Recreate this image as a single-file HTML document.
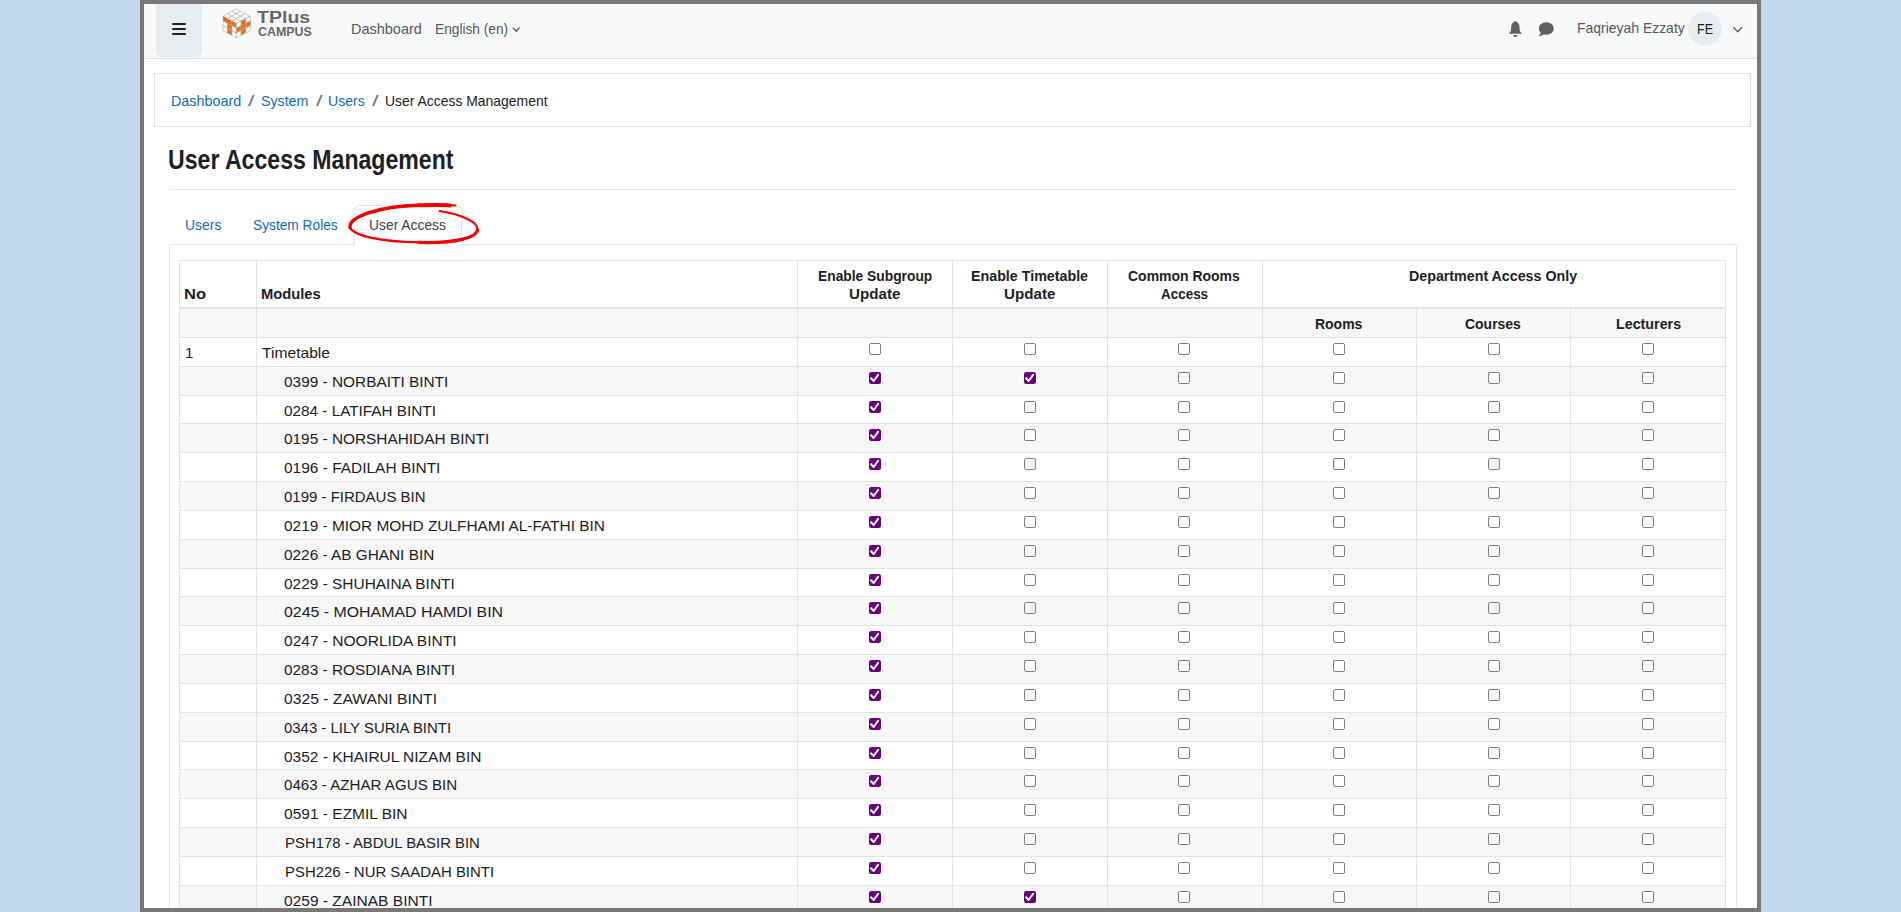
<!DOCTYPE html>
<html><head><meta charset="utf-8"><title>User Access Management</title>
<style>
*{box-sizing:border-box;margin:0;padding:0}
html,body{width:1901px;height:912px;overflow:hidden}
body{background:#c3d8ec;font-family:"Liberation Sans",sans-serif;color:#1d2125;position:relative}
.tx{position:absolute;white-space:nowrap;line-height:1;transform-origin:0 0}
.hl{position:absolute;height:1px;background:#e0e3e7}
.vl{position:absolute;width:1px;background:#e0e3e7}
.cb{position:absolute;width:12px;height:12px;border:1px solid #808080;border-radius:2px;background:#fff}
.ck{position:absolute}
</style></head><body>
<div style="position:absolute;left:140px;top:0;width:1621px;height:912px;background:#7b7776"></div>
<div style="position:absolute;left:144px;top:4px;width:1613px;height:904px;background:#fff"></div>
<div style="position:absolute;left:144px;top:4px;width:1613px;height:55px;background:#f8f9fa;border-bottom:1px solid #dee2e6"></div>
<div style="position:absolute;left:156px;top:4px;width:46px;height:53px;background:#e9ecef;border-radius:0 0 6px 6px"></div>
<div style="position:absolute;left:172px;top:23px;width:14px;height:2px;background:#1d2125;border-radius:1px"></div>
<div style="position:absolute;left:172px;top:28px;width:14px;height:2px;background:#1d2125;border-radius:1px"></div>
<div style="position:absolute;left:172px;top:33px;width:14px;height:2px;background:#1d2125;border-radius:1px"></div>
<svg style="position:absolute;left:0;top:0" width="1901" height="912" viewBox="0 0 1901 912">
<polygon points="223.00,16.20 227.47,13.77 231.93,16.17 227.47,18.60" fill="#ffffff" stroke="#aaa39c" stroke-width="0.55"/>
<polygon points="227.47,13.77 231.93,11.33 236.40,13.73 231.93,16.17" fill="#ffffff" stroke="#aaa39c" stroke-width="0.55"/>
<polygon points="231.93,11.33 236.40,8.90 240.87,11.30 236.40,13.73" fill="#ffffff" stroke="#aaa39c" stroke-width="0.55"/>
<polygon points="227.47,18.60 231.93,16.17 236.40,18.57 231.93,21.00" fill="#ffffff" stroke="#aaa39c" stroke-width="0.55"/>
<polygon points="231.93,16.17 236.40,13.73 240.87,16.13 236.40,18.57" fill="#ffffff" stroke="#aaa39c" stroke-width="0.55"/>
<polygon points="236.40,13.73 240.87,11.30 245.33,13.70 240.87,16.13" fill="#ffffff" stroke="#aaa39c" stroke-width="0.55"/>
<polygon points="231.93,21.00 236.40,18.57 240.87,20.97 236.40,23.40" fill="#ffffff" stroke="#aaa39c" stroke-width="0.55"/>
<polygon points="236.40,18.57 240.87,16.13 245.33,18.53 240.87,20.97" fill="#ffffff" stroke="#aaa39c" stroke-width="0.55"/>
<polygon points="240.87,16.13 245.33,13.70 249.80,16.10 245.33,18.53" fill="#ffffff" stroke="#aaa39c" stroke-width="0.55"/>
<polygon points="223.00,16.20 227.47,18.60 227.47,23.40 223.00,21.00" fill="#e8711c" stroke="#aaa39c" stroke-width="0.55"/>
<polygon points="227.47,18.60 231.93,21.00 231.93,25.80 227.47,23.40" fill="#e8711c" stroke="#aaa39c" stroke-width="0.55"/>
<polygon points="231.93,21.00 236.40,23.40 236.40,28.20 231.93,25.80" fill="#e8711c" stroke="#aaa39c" stroke-width="0.55"/>
<polygon points="223.00,21.00 227.47,23.40 227.47,28.20 223.00,25.80" fill="#ffffff" stroke="#aaa39c" stroke-width="0.55"/>
<polygon points="227.47,23.40 231.93,25.80 231.93,30.60 227.47,28.20" fill="#e8711c" stroke="#aaa39c" stroke-width="0.55"/>
<polygon points="231.93,25.80 236.40,28.20 236.40,33.00 231.93,30.60" fill="#ffffff" stroke="#aaa39c" stroke-width="0.55"/>
<polygon points="223.00,25.80 227.47,28.20 227.47,33.00 223.00,30.60" fill="#ffffff" stroke="#aaa39c" stroke-width="0.55"/>
<polygon points="227.47,28.20 231.93,30.60 231.93,35.40 227.47,33.00" fill="#e8711c" stroke="#aaa39c" stroke-width="0.55"/>
<polygon points="231.93,30.60 236.40,33.00 236.40,37.80 231.93,35.40" fill="#ffffff" stroke="#aaa39c" stroke-width="0.55"/>
<polygon points="236.40,23.40 241.13,20.93 241.13,25.73 236.40,28.20" fill="#ffffff" stroke="#aaa39c" stroke-width="0.55"/>
<polygon points="241.13,20.93 245.87,18.47 245.87,23.27 241.13,25.73" fill="#e8711c" stroke="#aaa39c" stroke-width="0.55"/>
<polygon points="245.87,18.47 250.60,16.00 250.60,20.80 245.87,23.27" fill="#ffffff" stroke="#aaa39c" stroke-width="0.55"/>
<polygon points="236.40,28.20 241.13,25.73 241.13,30.53 236.40,33.00" fill="#e8711c" stroke="#aaa39c" stroke-width="0.55"/>
<polygon points="241.13,25.73 245.87,23.27 245.87,28.07 241.13,30.53" fill="#e8711c" stroke="#aaa39c" stroke-width="0.55"/>
<polygon points="245.87,23.27 250.60,20.80 250.60,25.60 245.87,28.07" fill="#e8711c" stroke="#aaa39c" stroke-width="0.55"/>
<polygon points="236.40,33.00 241.13,30.53 241.13,35.33 236.40,37.80" fill="#ffffff" stroke="#aaa39c" stroke-width="0.55"/>
<polygon points="241.13,30.53 245.87,28.07 245.87,32.87 241.13,35.33" fill="#e8711c" stroke="#aaa39c" stroke-width="0.55"/>
<polygon points="245.87,28.07 250.60,25.60 250.60,30.40 245.87,32.87" fill="#ffffff" stroke="#aaa39c" stroke-width="0.55"/>
<path d="M1515.3 21.1 C1513.6 22.2 1511.4 23.4 1511.2 26.5 L1510.9 30.5 C1510.6 32 1509.6 32.9 1508.9 33.8 L1522 33.8 C1521.2 32.9 1520.2 32 1519.8 30.5 L1519.5 26.5 C1519.3 23.4 1517.1 22.2 1515.3 21.1 Z" fill="#616161"/>
<path d="M1513.3 34.9 L1517.7 34.9 C1517.5 36.2 1516.6 37 1515.5 37 C1514.4 37 1513.5 36.2 1513.3 34.9 Z" fill="#616161"/>
<ellipse cx="1546.3" cy="28.5" rx="7.5" ry="6.2" fill="#616161"/>
<path d="M1540.8 31.5 C1540.8 33.5 1539.8 35 1538.2 36 C1540.8 36 1542.6 35.2 1543.8 34.2 Z" fill="#616161"/>
<path d="M512.9 27.6 L516.3 31.3 L519.7 27.6" fill="none" stroke="#555b61" stroke-width="1.3"/>
<path d="M1733.5 27.3 L1737.7 31.8 L1741.9 27.3" fill="none" stroke="#555b61" stroke-width="1.3"/>
<circle cx="1704.9" cy="28.9" r="16.9" fill="#e9ecef"/>
</svg>
<div class="tx" style="left:256.6px;top:10px;font-size:16.8px;font-weight:700;color:#686868;transform:scaleX(1.165)">TPlus</div>
<div class="tx" style="left:257.8px;top:26.3px;font-size:12.6px;font-weight:700;color:#686868;transform:scaleX(0.985)">CAMPUS</div>
<div style="position:absolute;left:154px;top:73px;width:1597px;height:54px;border:1px solid #dee2e6;background:#fff"></div>
<div style="position:absolute;left:169px;top:189px;width:1567px;height:1px;background:#e3e5e8"></div>
<div style="position:absolute;left:169px;top:244px;width:1568px;height:680px;border:1px solid #e3e6e9;border-radius:3px;background:#fff"></div>
<div style="position:absolute;left:354px;top:205px;width:108px;height:40px;border:1px solid #e0e3e6;border-bottom:none;border-radius:6px 6px 0 0;background:#fff"></div>
<div style="position:absolute;left:180px;top:308px;width:1545px;height:29px;background:#f7f7f7"></div>
<div style="position:absolute;left:180px;top:366.00px;width:1545px;height:29.00px;background:#f7f7f7"></div>
<div style="position:absolute;left:180px;top:423.00px;width:1545px;height:29.00px;background:#f7f7f7"></div>
<div style="position:absolute;left:180px;top:481.00px;width:1545px;height:29.00px;background:#f7f7f7"></div>
<div style="position:absolute;left:180px;top:539.00px;width:1545px;height:29.00px;background:#f7f7f7"></div>
<div style="position:absolute;left:180px;top:596.00px;width:1545px;height:29.00px;background:#f7f7f7"></div>
<div style="position:absolute;left:180px;top:654.00px;width:1545px;height:29.00px;background:#f7f7f7"></div>
<div style="position:absolute;left:180px;top:712.00px;width:1545px;height:29.00px;background:#f7f7f7"></div>
<div style="position:absolute;left:180px;top:769.00px;width:1545px;height:29.00px;background:#f7f7f7"></div>
<div style="position:absolute;left:180px;top:827.00px;width:1545px;height:29.00px;background:#f7f7f7"></div>
<div style="position:absolute;left:180px;top:885.00px;width:1545px;height:29.00px;background:#f7f7f7"></div>
<div class="hl" style="left:179px;top:260px;width:1547px"></div>
<div class="hl" style="left:179px;top:307px;width:1547px;height:2px;background:#e2e5e9"></div>
<div class="hl" style="left:1262px;top:307px;width:464px"></div>
<div class="hl" style="left:179px;top:337.00px;width:1547px"></div>
<div class="hl" style="left:179px;top:366.00px;width:1547px"></div>
<div class="hl" style="left:179px;top:395.00px;width:1547px"></div>
<div class="hl" style="left:179px;top:423.00px;width:1547px"></div>
<div class="hl" style="left:179px;top:452.00px;width:1547px"></div>
<div class="hl" style="left:179px;top:481.00px;width:1547px"></div>
<div class="hl" style="left:179px;top:510.00px;width:1547px"></div>
<div class="hl" style="left:179px;top:539.00px;width:1547px"></div>
<div class="hl" style="left:179px;top:568.00px;width:1547px"></div>
<div class="hl" style="left:179px;top:596.00px;width:1547px"></div>
<div class="hl" style="left:179px;top:625.00px;width:1547px"></div>
<div class="hl" style="left:179px;top:654.00px;width:1547px"></div>
<div class="hl" style="left:179px;top:683.00px;width:1547px"></div>
<div class="hl" style="left:179px;top:712.00px;width:1547px"></div>
<div class="hl" style="left:179px;top:741.00px;width:1547px"></div>
<div class="hl" style="left:179px;top:769.00px;width:1547px"></div>
<div class="hl" style="left:179px;top:798.00px;width:1547px"></div>
<div class="hl" style="left:179px;top:827.00px;width:1547px"></div>
<div class="hl" style="left:179px;top:856.00px;width:1547px"></div>
<div class="hl" style="left:179px;top:885.00px;width:1547px"></div>
<div class="hl" style="left:179px;top:914.00px;width:1547px"></div>
<div class="vl" style="left:179px;top:260px;height:660px"></div>
<div class="vl" style="left:256px;top:260px;height:660px"></div>
<div class="vl" style="left:797px;top:260px;height:660px"></div>
<div class="vl" style="left:952px;top:260px;height:660px"></div>
<div class="vl" style="left:1107px;top:260px;height:660px"></div>
<div class="vl" style="left:1262px;top:260px;height:660px"></div>
<div class="vl" style="left:1416px;top:307px;height:620px"></div>
<div class="vl" style="left:1570px;top:307px;height:620px"></div>
<div class="vl" style="left:1725px;top:260px;height:660px"></div>
<div class="tx" style="left:350.54px;top:20.90px;font-size:15px;font-weight:400;color:#555b61;transform:scaleX(0.9648);">Dashboard</div>
<div class="tx" style="left:435.09px;top:20.90px;font-size:15px;font-weight:400;color:#555b61;transform:scaleX(0.9141);">English (en)</div>
<div class="tx" style="left:1576.57px;top:20.00px;font-size:15px;font-weight:400;color:#555b61;transform:scaleX(0.9296);">Faqrieyah Ezzaty</div>
<div class="tx" style="left:1696.97px;top:20.90px;font-size:15px;font-weight:400;color:#1d2125;transform:scaleX(0.8333);">FE</div>
<div class="tx" style="left:170.54px;top:92.70px;font-size:15px;font-weight:400;color:#0f6cbf;transform:scaleX(0.9577);">Dashboard</div>
<div class="tx" style="left:247.60px;top:92.70px;font-size:15px;font-weight:400;color:#6a737b;transform:scaleX(1.5750);">/</div>
<div class="tx" style="left:260.65px;top:92.70px;font-size:15px;font-weight:400;color:#0f6cbf;transform:scaleX(0.9458);">System</div>
<div class="tx" style="left:315.50px;top:92.70px;font-size:15px;font-weight:400;color:#6a737b;transform:scaleX(1.5750);">/</div>
<div class="tx" style="left:327.66px;top:92.70px;font-size:15px;font-weight:400;color:#0f6cbf;transform:scaleX(0.9368);">Users</div>
<div class="tx" style="left:371.60px;top:92.70px;font-size:15px;font-weight:400;color:#6a737b;transform:scaleX(1.5750);">/</div>
<div class="tx" style="left:384.87px;top:92.70px;font-size:15px;font-weight:400;color:#1d2125;transform:scaleX(0.9282);">User Access Management</div>
<div class="tx" style="left:167.69px;top:147.00px;font-size:27px;font-weight:700;color:#1d2125;transform:scaleX(0.8557);">User Access Management</div>
<div class="tx" style="left:184.57px;top:216.50px;font-size:15px;font-weight:400;color:#0f6cbf;transform:scaleX(0.9289);">Users</div>
<div class="tx" style="left:253.28px;top:216.50px;font-size:15px;font-weight:400;color:#0f6cbf;transform:scaleX(0.9154);">System Roles</div>
<div class="tx" style="left:369.38px;top:216.50px;font-size:15px;font-weight:400;color:#3b4046;transform:scaleX(0.9232);">User Access</div>
<div class="tx" style="left:184.09px;top:286.20px;font-size:15px;font-weight:700;color:#1d2125;transform:scaleX(1.1056);">No</div>
<div class="tx" style="left:261.32px;top:286.20px;font-size:15px;font-weight:700;color:#1d2125;transform:scaleX(0.9814);">Modules</div>
<div class="tx" style="left:817.98px;top:267.60px;font-size:15px;font-weight:700;color:#1d2125;transform:scaleX(0.9203);">Enable Subgroup</div>
<div class="tx" style="left:849.49px;top:285.60px;font-size:15px;font-weight:700;color:#1d2125;transform:scaleX(1.0102);">Update</div>
<div class="tx" style="left:971.15px;top:267.60px;font-size:15px;font-weight:700;color:#1d2125;transform:scaleX(0.9508);">Enable Timetable</div>
<div class="tx" style="left:1004.49px;top:285.60px;font-size:15px;font-weight:700;color:#1d2125;transform:scaleX(1.0102);">Update</div>
<div class="tx" style="left:1128.17px;top:267.60px;font-size:15px;font-weight:700;color:#1d2125;transform:scaleX(0.9319);">Common Rooms</div>
<div class="tx" style="left:1160.60px;top:285.60px;font-size:15px;font-weight:700;color:#1d2125;transform:scaleX(0.8961);">Access</div>
<div class="tx" style="left:1409.25px;top:267.80px;font-size:15px;font-weight:700;color:#1d2125;transform:scaleX(0.9494);">Department Access Only</div>
<div class="tx" style="left:1315.37px;top:316.10px;font-size:15px;font-weight:700;color:#1d2125;transform:scaleX(0.9306);">Rooms</div>
<div class="tx" style="left:1465.47px;top:316.10px;font-size:15px;font-weight:700;color:#1d2125;transform:scaleX(0.9305);">Courses</div>
<div class="tx" style="left:1615.65px;top:316.10px;font-size:15px;font-weight:700;color:#1d2125;transform:scaleX(0.9522);">Lecturers</div>
<div class="tx" style="left:184.90px;top:345.00px;font-size:15px;font-weight:400;color:#1d2125;">1</div>
<div class="tx" style="left:262.10px;top:345.00px;font-size:15px;font-weight:400;color:#1d2125;transform:scaleX(1.0415);">Timetable</div>
<div class="tx" style="left:284.07px;top:374.00px;font-size:15px;color:#1d2125;transform:scaleX(1.0266)">0399 - NORBAITI BINTI</div>
<div class="tx" style="left:284.08px;top:403.00px;font-size:15px;color:#1d2125;transform:scaleX(1.0204)">0284 - LATIFAH BINTI</div>
<div class="tx" style="left:284.07px;top:431.00px;font-size:15px;color:#1d2125;transform:scaleX(1.0258)">0195 - NORSHAHIDAH BINTI</div>
<div class="tx" style="left:284.07px;top:460.00px;font-size:15px;color:#1d2125;transform:scaleX(1.0309)">0196 - FADILAH BINTI</div>
<div class="tx" style="left:284.10px;top:489.00px;font-size:15px;color:#1d2125;transform:scaleX(0.9986)">0199 - FIRDAUS BIN</div>
<div class="tx" style="left:284.07px;top:518.00px;font-size:15px;color:#1d2125;transform:scaleX(1.0277)">0219 - MIOR MOHD ZULFHAMI AL-FATHI BIN</div>
<div class="tx" style="left:284.08px;top:547.00px;font-size:15px;color:#1d2125;transform:scaleX(1.0241)">0226 - AB GHANI BIN</div>
<div class="tx" style="left:284.07px;top:576.00px;font-size:15px;color:#1d2125;transform:scaleX(1.0293)">0229 - SHUHAINA BINTI</div>
<div class="tx" style="left:284.04px;top:604.00px;font-size:15px;color:#1d2125;transform:scaleX(1.0598)">0245 - MOHAMAD HAMDI BIN</div>
<div class="tx" style="left:284.07px;top:633.00px;font-size:15px;color:#1d2125;transform:scaleX(1.0348)">0247 - NOORLIDA BINTI</div>
<div class="tx" style="left:284.07px;top:662.00px;font-size:15px;color:#1d2125;transform:scaleX(1.0256)">0283 - ROSDIANA BINTI</div>
<div class="tx" style="left:284.05px;top:691.00px;font-size:15px;color:#1d2125;transform:scaleX(1.0451)">0325 - ZAWANI BINTI</div>
<div class="tx" style="left:284.10px;top:720.00px;font-size:15px;color:#1d2125;transform:scaleX(0.9952)">0343 - LILY SURIA BINTI</div>
<div class="tx" style="left:284.07px;top:749.00px;font-size:15px;color:#1d2125;transform:scaleX(1.0328)">0352 - KHAIRUL NIZAM BIN</div>
<div class="tx" style="left:284.09px;top:777.00px;font-size:15px;color:#1d2125;transform:scaleX(1.0082)">0463 - AZHAR AGUS BIN</div>
<div class="tx" style="left:284.07px;top:806.00px;font-size:15px;color:#1d2125;transform:scaleX(1.0342)">0591 - EZMIL BIN</div>
<div class="tx" style="left:284.71px;top:835.00px;font-size:15px;color:#1d2125;transform:scaleX(0.9933)">PSH178 - ABDUL BASIR BIN</div>
<div class="tx" style="left:284.70px;top:864.00px;font-size:15px;color:#1d2125;transform:scaleX(0.9952)">PSH226 - NUR SAADAH BINTI</div>
<div class="tx" style="left:284.06px;top:893.00px;font-size:15px;color:#1d2125;transform:scaleX(1.0355)">0259 - ZAINAB BINTI</div>
<div class="tx" style="left:284.10px;top:922.00px;font-size:15px;color:#1d2125;transform:scaleX(0.9982)">0260 - X</div>
<i class="cb" style="left:869.00px;top:342.50px"></i>
<i class="cb" style="left:1024.00px;top:342.50px"></i>
<i class="cb" style="left:1178.00px;top:342.50px"></i>
<i class="cb" style="left:1333.00px;top:342.50px"></i>
<i class="cb" style="left:1488.00px;top:342.50px"></i>
<i class="cb" style="left:1642.00px;top:342.50px"></i>
<svg class="ck" style="left:869.00px;top:371.50px" width="12" height="12" viewBox="0 0 12 12"><rect x="0" y="0" width="12" height="12" rx="2.2" fill="#6a0080"/><path d="M2.1 6.3 L4.6 9 L9.1 2.9" fill="none" stroke="#fff" stroke-width="2" stroke-linecap="round" stroke-linejoin="round"/></svg>
<svg class="ck" style="left:1024.00px;top:371.50px" width="12" height="12" viewBox="0 0 12 12"><rect x="0" y="0" width="12" height="12" rx="2.2" fill="#6a0080"/><path d="M2.1 6.3 L4.6 9 L9.1 2.9" fill="none" stroke="#fff" stroke-width="2" stroke-linecap="round" stroke-linejoin="round"/></svg>
<i class="cb" style="left:1178.00px;top:371.50px"></i>
<i class="cb" style="left:1333.00px;top:371.50px"></i>
<i class="cb" style="left:1488.00px;top:371.50px"></i>
<i class="cb" style="left:1642.00px;top:371.50px"></i>
<svg class="ck" style="left:869.00px;top:400.50px" width="12" height="12" viewBox="0 0 12 12"><rect x="0" y="0" width="12" height="12" rx="2.2" fill="#6a0080"/><path d="M2.1 6.3 L4.6 9 L9.1 2.9" fill="none" stroke="#fff" stroke-width="2" stroke-linecap="round" stroke-linejoin="round"/></svg>
<i class="cb" style="left:1024.00px;top:400.50px"></i>
<i class="cb" style="left:1178.00px;top:400.50px"></i>
<i class="cb" style="left:1333.00px;top:400.50px"></i>
<i class="cb" style="left:1488.00px;top:400.50px"></i>
<i class="cb" style="left:1642.00px;top:400.50px"></i>
<svg class="ck" style="left:869.00px;top:428.50px" width="12" height="12" viewBox="0 0 12 12"><rect x="0" y="0" width="12" height="12" rx="2.2" fill="#6a0080"/><path d="M2.1 6.3 L4.6 9 L9.1 2.9" fill="none" stroke="#fff" stroke-width="2" stroke-linecap="round" stroke-linejoin="round"/></svg>
<i class="cb" style="left:1024.00px;top:428.50px"></i>
<i class="cb" style="left:1178.00px;top:428.50px"></i>
<i class="cb" style="left:1333.00px;top:428.50px"></i>
<i class="cb" style="left:1488.00px;top:428.50px"></i>
<i class="cb" style="left:1642.00px;top:428.50px"></i>
<svg class="ck" style="left:869.00px;top:457.50px" width="12" height="12" viewBox="0 0 12 12"><rect x="0" y="0" width="12" height="12" rx="2.2" fill="#6a0080"/><path d="M2.1 6.3 L4.6 9 L9.1 2.9" fill="none" stroke="#fff" stroke-width="2" stroke-linecap="round" stroke-linejoin="round"/></svg>
<i class="cb" style="left:1024.00px;top:457.50px"></i>
<i class="cb" style="left:1178.00px;top:457.50px"></i>
<i class="cb" style="left:1333.00px;top:457.50px"></i>
<i class="cb" style="left:1488.00px;top:457.50px"></i>
<i class="cb" style="left:1642.00px;top:457.50px"></i>
<svg class="ck" style="left:869.00px;top:486.50px" width="12" height="12" viewBox="0 0 12 12"><rect x="0" y="0" width="12" height="12" rx="2.2" fill="#6a0080"/><path d="M2.1 6.3 L4.6 9 L9.1 2.9" fill="none" stroke="#fff" stroke-width="2" stroke-linecap="round" stroke-linejoin="round"/></svg>
<i class="cb" style="left:1024.00px;top:486.50px"></i>
<i class="cb" style="left:1178.00px;top:486.50px"></i>
<i class="cb" style="left:1333.00px;top:486.50px"></i>
<i class="cb" style="left:1488.00px;top:486.50px"></i>
<i class="cb" style="left:1642.00px;top:486.50px"></i>
<svg class="ck" style="left:869.00px;top:515.50px" width="12" height="12" viewBox="0 0 12 12"><rect x="0" y="0" width="12" height="12" rx="2.2" fill="#6a0080"/><path d="M2.1 6.3 L4.6 9 L9.1 2.9" fill="none" stroke="#fff" stroke-width="2" stroke-linecap="round" stroke-linejoin="round"/></svg>
<i class="cb" style="left:1024.00px;top:515.50px"></i>
<i class="cb" style="left:1178.00px;top:515.50px"></i>
<i class="cb" style="left:1333.00px;top:515.50px"></i>
<i class="cb" style="left:1488.00px;top:515.50px"></i>
<i class="cb" style="left:1642.00px;top:515.50px"></i>
<svg class="ck" style="left:869.00px;top:544.50px" width="12" height="12" viewBox="0 0 12 12"><rect x="0" y="0" width="12" height="12" rx="2.2" fill="#6a0080"/><path d="M2.1 6.3 L4.6 9 L9.1 2.9" fill="none" stroke="#fff" stroke-width="2" stroke-linecap="round" stroke-linejoin="round"/></svg>
<i class="cb" style="left:1024.00px;top:544.50px"></i>
<i class="cb" style="left:1178.00px;top:544.50px"></i>
<i class="cb" style="left:1333.00px;top:544.50px"></i>
<i class="cb" style="left:1488.00px;top:544.50px"></i>
<i class="cb" style="left:1642.00px;top:544.50px"></i>
<svg class="ck" style="left:869.00px;top:573.50px" width="12" height="12" viewBox="0 0 12 12"><rect x="0" y="0" width="12" height="12" rx="2.2" fill="#6a0080"/><path d="M2.1 6.3 L4.6 9 L9.1 2.9" fill="none" stroke="#fff" stroke-width="2" stroke-linecap="round" stroke-linejoin="round"/></svg>
<i class="cb" style="left:1024.00px;top:573.50px"></i>
<i class="cb" style="left:1178.00px;top:573.50px"></i>
<i class="cb" style="left:1333.00px;top:573.50px"></i>
<i class="cb" style="left:1488.00px;top:573.50px"></i>
<i class="cb" style="left:1642.00px;top:573.50px"></i>
<svg class="ck" style="left:869.00px;top:601.50px" width="12" height="12" viewBox="0 0 12 12"><rect x="0" y="0" width="12" height="12" rx="2.2" fill="#6a0080"/><path d="M2.1 6.3 L4.6 9 L9.1 2.9" fill="none" stroke="#fff" stroke-width="2" stroke-linecap="round" stroke-linejoin="round"/></svg>
<i class="cb" style="left:1024.00px;top:601.50px"></i>
<i class="cb" style="left:1178.00px;top:601.50px"></i>
<i class="cb" style="left:1333.00px;top:601.50px"></i>
<i class="cb" style="left:1488.00px;top:601.50px"></i>
<i class="cb" style="left:1642.00px;top:601.50px"></i>
<svg class="ck" style="left:869.00px;top:630.50px" width="12" height="12" viewBox="0 0 12 12"><rect x="0" y="0" width="12" height="12" rx="2.2" fill="#6a0080"/><path d="M2.1 6.3 L4.6 9 L9.1 2.9" fill="none" stroke="#fff" stroke-width="2" stroke-linecap="round" stroke-linejoin="round"/></svg>
<i class="cb" style="left:1024.00px;top:630.50px"></i>
<i class="cb" style="left:1178.00px;top:630.50px"></i>
<i class="cb" style="left:1333.00px;top:630.50px"></i>
<i class="cb" style="left:1488.00px;top:630.50px"></i>
<i class="cb" style="left:1642.00px;top:630.50px"></i>
<svg class="ck" style="left:869.00px;top:659.50px" width="12" height="12" viewBox="0 0 12 12"><rect x="0" y="0" width="12" height="12" rx="2.2" fill="#6a0080"/><path d="M2.1 6.3 L4.6 9 L9.1 2.9" fill="none" stroke="#fff" stroke-width="2" stroke-linecap="round" stroke-linejoin="round"/></svg>
<i class="cb" style="left:1024.00px;top:659.50px"></i>
<i class="cb" style="left:1178.00px;top:659.50px"></i>
<i class="cb" style="left:1333.00px;top:659.50px"></i>
<i class="cb" style="left:1488.00px;top:659.50px"></i>
<i class="cb" style="left:1642.00px;top:659.50px"></i>
<svg class="ck" style="left:869.00px;top:688.50px" width="12" height="12" viewBox="0 0 12 12"><rect x="0" y="0" width="12" height="12" rx="2.2" fill="#6a0080"/><path d="M2.1 6.3 L4.6 9 L9.1 2.9" fill="none" stroke="#fff" stroke-width="2" stroke-linecap="round" stroke-linejoin="round"/></svg>
<i class="cb" style="left:1024.00px;top:688.50px"></i>
<i class="cb" style="left:1178.00px;top:688.50px"></i>
<i class="cb" style="left:1333.00px;top:688.50px"></i>
<i class="cb" style="left:1488.00px;top:688.50px"></i>
<i class="cb" style="left:1642.00px;top:688.50px"></i>
<svg class="ck" style="left:869.00px;top:717.50px" width="12" height="12" viewBox="0 0 12 12"><rect x="0" y="0" width="12" height="12" rx="2.2" fill="#6a0080"/><path d="M2.1 6.3 L4.6 9 L9.1 2.9" fill="none" stroke="#fff" stroke-width="2" stroke-linecap="round" stroke-linejoin="round"/></svg>
<i class="cb" style="left:1024.00px;top:717.50px"></i>
<i class="cb" style="left:1178.00px;top:717.50px"></i>
<i class="cb" style="left:1333.00px;top:717.50px"></i>
<i class="cb" style="left:1488.00px;top:717.50px"></i>
<i class="cb" style="left:1642.00px;top:717.50px"></i>
<svg class="ck" style="left:869.00px;top:746.50px" width="12" height="12" viewBox="0 0 12 12"><rect x="0" y="0" width="12" height="12" rx="2.2" fill="#6a0080"/><path d="M2.1 6.3 L4.6 9 L9.1 2.9" fill="none" stroke="#fff" stroke-width="2" stroke-linecap="round" stroke-linejoin="round"/></svg>
<i class="cb" style="left:1024.00px;top:746.50px"></i>
<i class="cb" style="left:1178.00px;top:746.50px"></i>
<i class="cb" style="left:1333.00px;top:746.50px"></i>
<i class="cb" style="left:1488.00px;top:746.50px"></i>
<i class="cb" style="left:1642.00px;top:746.50px"></i>
<svg class="ck" style="left:869.00px;top:774.50px" width="12" height="12" viewBox="0 0 12 12"><rect x="0" y="0" width="12" height="12" rx="2.2" fill="#6a0080"/><path d="M2.1 6.3 L4.6 9 L9.1 2.9" fill="none" stroke="#fff" stroke-width="2" stroke-linecap="round" stroke-linejoin="round"/></svg>
<i class="cb" style="left:1024.00px;top:774.50px"></i>
<i class="cb" style="left:1178.00px;top:774.50px"></i>
<i class="cb" style="left:1333.00px;top:774.50px"></i>
<i class="cb" style="left:1488.00px;top:774.50px"></i>
<i class="cb" style="left:1642.00px;top:774.50px"></i>
<svg class="ck" style="left:869.00px;top:803.50px" width="12" height="12" viewBox="0 0 12 12"><rect x="0" y="0" width="12" height="12" rx="2.2" fill="#6a0080"/><path d="M2.1 6.3 L4.6 9 L9.1 2.9" fill="none" stroke="#fff" stroke-width="2" stroke-linecap="round" stroke-linejoin="round"/></svg>
<i class="cb" style="left:1024.00px;top:803.50px"></i>
<i class="cb" style="left:1178.00px;top:803.50px"></i>
<i class="cb" style="left:1333.00px;top:803.50px"></i>
<i class="cb" style="left:1488.00px;top:803.50px"></i>
<i class="cb" style="left:1642.00px;top:803.50px"></i>
<svg class="ck" style="left:869.00px;top:832.50px" width="12" height="12" viewBox="0 0 12 12"><rect x="0" y="0" width="12" height="12" rx="2.2" fill="#6a0080"/><path d="M2.1 6.3 L4.6 9 L9.1 2.9" fill="none" stroke="#fff" stroke-width="2" stroke-linecap="round" stroke-linejoin="round"/></svg>
<i class="cb" style="left:1024.00px;top:832.50px"></i>
<i class="cb" style="left:1178.00px;top:832.50px"></i>
<i class="cb" style="left:1333.00px;top:832.50px"></i>
<i class="cb" style="left:1488.00px;top:832.50px"></i>
<i class="cb" style="left:1642.00px;top:832.50px"></i>
<svg class="ck" style="left:869.00px;top:861.50px" width="12" height="12" viewBox="0 0 12 12"><rect x="0" y="0" width="12" height="12" rx="2.2" fill="#6a0080"/><path d="M2.1 6.3 L4.6 9 L9.1 2.9" fill="none" stroke="#fff" stroke-width="2" stroke-linecap="round" stroke-linejoin="round"/></svg>
<i class="cb" style="left:1024.00px;top:861.50px"></i>
<i class="cb" style="left:1178.00px;top:861.50px"></i>
<i class="cb" style="left:1333.00px;top:861.50px"></i>
<i class="cb" style="left:1488.00px;top:861.50px"></i>
<i class="cb" style="left:1642.00px;top:861.50px"></i>
<svg class="ck" style="left:869.00px;top:890.50px" width="12" height="12" viewBox="0 0 12 12"><rect x="0" y="0" width="12" height="12" rx="2.2" fill="#6a0080"/><path d="M2.1 6.3 L4.6 9 L9.1 2.9" fill="none" stroke="#fff" stroke-width="2" stroke-linecap="round" stroke-linejoin="round"/></svg>
<svg class="ck" style="left:1024.00px;top:890.50px" width="12" height="12" viewBox="0 0 12 12"><rect x="0" y="0" width="12" height="12" rx="2.2" fill="#6a0080"/><path d="M2.1 6.3 L4.6 9 L9.1 2.9" fill="none" stroke="#fff" stroke-width="2" stroke-linecap="round" stroke-linejoin="round"/></svg>
<i class="cb" style="left:1178.00px;top:890.50px"></i>
<i class="cb" style="left:1333.00px;top:890.50px"></i>
<i class="cb" style="left:1488.00px;top:890.50px"></i>
<i class="cb" style="left:1642.00px;top:890.50px"></i>
<svg style="position:absolute;left:0;top:0" width="1901" height="912" viewBox="0 0 1901 912" fill="none" stroke="#f20000" stroke-linecap="round">
<path d="M439.5 211 C462 214.5 477.8 222 477.6 229.5" stroke-width="2"/>
<path d="M477.6 229.5 C477.2 237.5 456 243.5 419 242.4" stroke-width="3.2"/>
<path d="M419 242.4 C381 241.6 354 236 350 227.5" stroke-width="2.4"/>
<path d="M350 227.5 C348.5 217 380 206 419 205.3" stroke-width="3.4"/>
<path d="M352 223 C356 215 385 207.5 410 206.5" stroke-width="1.2"/>
<path d="M419 205.3 C435 204.9 443 204.9 450 205.4" stroke-width="4"/>
<path d="M448 205.3 C451 205.4 453 205.3 455.5 205.4" stroke-width="2"/>
</svg>
<div style="position:absolute;left:140px;top:908px;width:1621px;height:4px;background:#7b7776"></div>
</body></html>
